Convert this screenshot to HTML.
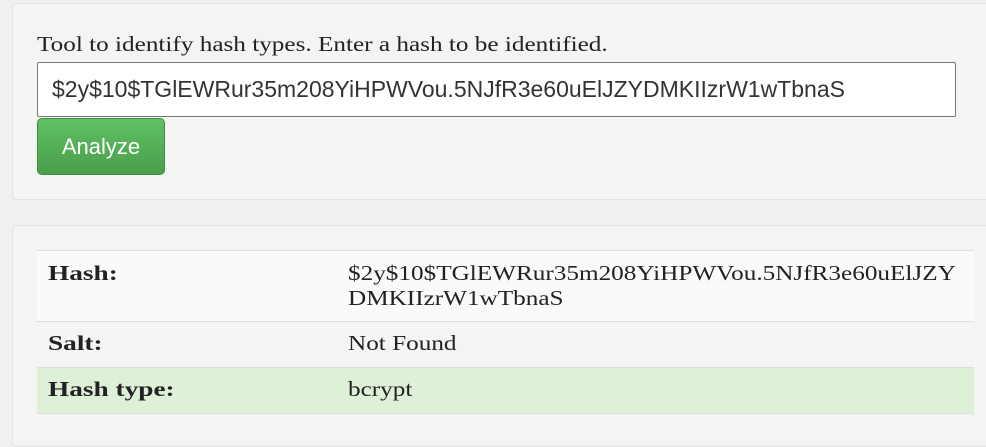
<!DOCTYPE html>
<html><head><style>
body{margin:0;width:986px;height:420px;overflow:hidden;background:#f0f0f0;font-family:"Liberation Serif",Georgia,serif;color:#222;position:relative}
.panel{position:absolute;left:12px;width:990px;background:#f4f4f4;border:1px solid #e2e2e2;border-radius:4px}
.p1{top:3px;height:195px}
.p2{top:225px;height:220px}
.sx{display:inline-block;transform-origin:0 0;white-space:nowrap}
.title{position:absolute;left:37px;top:32px;font-size:21px;white-space:nowrap}
.inp{position:absolute;left:37px;top:62px;width:917px;height:53px;background:#fff;border:1px solid #777;border-radius:2px}
.inp span{position:absolute;left:14px;top:13px;font-family:"Liberation Sans",Arial,sans-serif;font-size:23px;color:#333;white-space:nowrap}
.btn{position:absolute;left:37px;top:118px;width:128px;height:57px;border-radius:5px;background:linear-gradient(#5fc164,#4a9e4b);border:1px solid #3e8e3f;box-sizing:border-box;color:#fff;font-family:"Liberation Sans",Arial,sans-serif;font-size:22px;text-align:center;line-height:55px}
.row{position:absolute;left:37px;width:937px;border-top:1px solid #ddd;box-sizing:border-box;font-size:21px}
.row b{position:absolute;left:11px;line-height:25px}
.row span.v{position:absolute;left:311px;white-space:nowrap;line-height:25px}
</style></head><body>
<div class="panel p1"></div>
<div class="panel p2"></div>
<div class="title"><span class="sx" style="transform:scaleX(1.2)">Tool to identify hash types. Enter a hash to be identified.</span></div>
<div class="inp"><span>$2y$10$TGlEWRur35m208YiHPWVou.5NJfR3e60uElJZYDMKIIzrW1wTbnaS</span></div>
<div class="btn">Analyze</div>
<div class="row" style="top:250px;height:71px;background:#fafafa"><b style="top:10px"><span class="sx" style="transform:scaleX(1.3)">Hash:</span></b><span class="v" style="top:10px"><span class="sx" style="transform:scaleX(1.2)">$2y$10$TGlEWRur35m208YiHPWVou.5NJfR3e60uElJZY<br>DMKIIzrW1wTbnaS</span></span></div>
<div class="row" style="top:321px;height:46px;background:#f4f4f4"><b style="top:9px"><span class="sx" style="transform:scaleX(1.3)">Salt:</span></b><span class="v" style="top:9px"><span class="sx" style="transform:scaleX(1.2)">Not Found</span></span></div>
<div class="row" style="top:367px;height:47px;background:#dff0d8;border-bottom:1px solid #ddd"><b style="top:9px"><span class="sx" style="transform:scaleX(1.3)">Hash type:</span></b><span class="v" style="top:9px"><span class="sx" style="transform:scaleX(1.2)">bcrypt</span></span></div>
</body></html>
